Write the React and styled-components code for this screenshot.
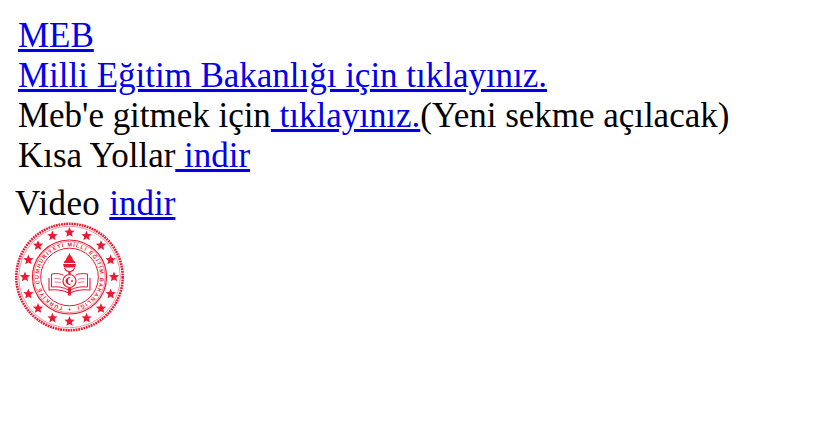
import React from 'react';
import styled, { createGlobalStyle } from 'styled-components';

const GlobalStyle = createGlobalStyle`
  html, body {
    margin: 0;
    background: #fff;
  }
  body {
    padding: 8px;
    font-family: "Liberation Serif", "Times New Roman", serif;
    font-size: 35px;
    line-height: 40px;
    color: #000;
  }
  a {
    color: #0000ee;
    text-decoration: underline;
  }
`;

const Links = styled.div`
  padding: 8px 0 0 10px;
  letter-spacing: -0.02px;
`;

const Line = styled.div`
  white-space: nowrap;
`;

const VideoLine = styled.div`
  margin: 8px 0 0 7px;
  white-space: nowrap;
  letter-spacing: 0.35px;

  a {
    letter-spacing: 0;
  }
`;

const LogoWrap = styled.div`
  margin: -2px 0 0 7px;
  width: 110px;
  height: 110px;
  line-height: 0;
`;

const RED = '#ea1a32';

const starPoints = (cx, cy, r) => {
  const pts = [];
  for (let i = 0; i < 10; i++) {
    const rad = i % 2 === 0 ? r : r * 0.45;
    const a = (Math.PI / 5) * i - Math.PI / 2;
    pts.push(`${(cx + rad * Math.cos(a)).toFixed(2)},${(cy + rad * Math.sin(a)).toFixed(2)}`);
  }
  return pts.join(' ');
};

const Stars = () => {
  const items = [];
  for (let i = 0; i < 16; i++) {
    const a = (Math.PI / 8) * i;
    const x = 55 + 44.5 * Math.sin(a);
    const y = 55 - 44.5 * Math.cos(a);
    items.push(<polygon key={i} points={starPoints(x, y, 5.4)} fill={RED} />);
  }
  return <g>{items}</g>;
};

const MebLogo = () => (
  <svg width="110" height="110" viewBox="0.5 0 110 110">
    <defs>
      <path id="ringText" d="M 48.7 84.8 A 30.5 30.5 0 1 1 61.3 84.8" fill="none" />
    </defs>
    {/* rope edge */}
    <circle cx="55" cy="55" r="53.2" fill="none" stroke={RED} strokeWidth="2.6" strokeDasharray="1.8 0.8" />
    <circle cx="55" cy="55" r="50.8" fill="none" stroke={RED} strokeWidth="0.6" opacity="0.8" />
    <Stars />
    {/* text ring */}
    <circle cx="55" cy="55" r="37" fill="none" stroke={RED} strokeWidth="1.2" />
    <circle cx="55" cy="55" r="35.6" fill="none" stroke={RED} strokeWidth="0.5" />
    <circle cx="55" cy="55" r="28.8" fill="none" stroke={RED} strokeWidth="1" />
    <text fontFamily="Liberation Sans, sans-serif" fontSize="5.4" fontWeight="700" fill={RED}>
      <textPath href="#ringText" textLength="177" lengthAdjust="spacing">TÜRKİYE CUMHURİYETİ MİLLİ EĞİTİM BAKANLIĞI</textPath>
    </text>
    <circle cx="55" cy="87.5" r="1" fill={RED} />
    {/* torch */}
    <path d="M55 31c-.5 2.500-3.500 4-3.500 7-1.300.6-2 1.500-2.200 3h11.400c-.2-1.500-.9-2.400-2.200-3 0-3-3-4.500-3.500-7z" fill={RED} />
    <path d="M48.500 42h13l-1 3.500h-11z" fill={RED} />
    <path d="M50 46c1 2.500 3 3.500 5 3.500s4-1 5-3.500" fill="none" stroke={RED} strokeWidth="1.100" />
    <path d="M53.800 49.500h2.400v2.500h-2.400z" fill={RED} />
    {/* crescent and star */}
    <circle cx="55" cy="59" r="6.500" fill="none" stroke={RED} strokeWidth="1.200" />
    <path d="M56.800 55.600a3.900 3.900 0 1 0 0 6.800a3.200 3.200 0 1 1 0-6.800z" fill={RED} />
    <polygon points={starPoints(57.500, 59, 1.500)} fill={RED} />
    {/* open book */}
    <path d="M37 52c5-.8 9-.4 12 1.200M73 52c-5-.8-9-.4-12 1.200" fill="none" stroke={RED} strokeWidth="1" />
    <path d="M37 52v13c6-.7 12 .2 17 3M73 52v13c-6-.7-12 .2-17 3" fill="none" stroke={RED} strokeWidth="1" />
    <path d="M34.500 56v12c8-.8 14 .2 18.500 2.500h4c4.500-2.300 10.500-3.300 18.500-2.500V56" fill="none" stroke={RED} strokeWidth="1.100" />
    <path d="M40 56.500c2.500-.2 4.500.1 6.500 1M40 60c2.500-.2 4.500.1 6.500 1M70 56.500c-2.500-.2-4.500.1-6.500 1M70 60c-2.500-.2-4.500.1-6.500 1" fill="none" stroke={RED} strokeWidth="0.6" />
    <path d="M53.500 66h3v7.500h-3z" fill={RED} />
  </svg>
);

export default function App() {
  return (
    <>
      <GlobalStyle />
      <Links>
        <Line><a href="#meb">MEB</a></Line>
        <Line><a href="#meb">Milli Eğitim Bakanlığı için tıklayınız.</a></Line>
        <Line>Meb'e gitmek için<a href="#meb"> tıklayınız.</a>(Yeni sekme açılacak)</Line>
        <Line>Kısa Yollar<a href="#indir"> indir</a></Line>
      </Links>
      <VideoLine>Video <a href="#indir">indir</a></VideoLine>
      <LogoWrap><MebLogo /></LogoWrap>
    </>
  );
}
